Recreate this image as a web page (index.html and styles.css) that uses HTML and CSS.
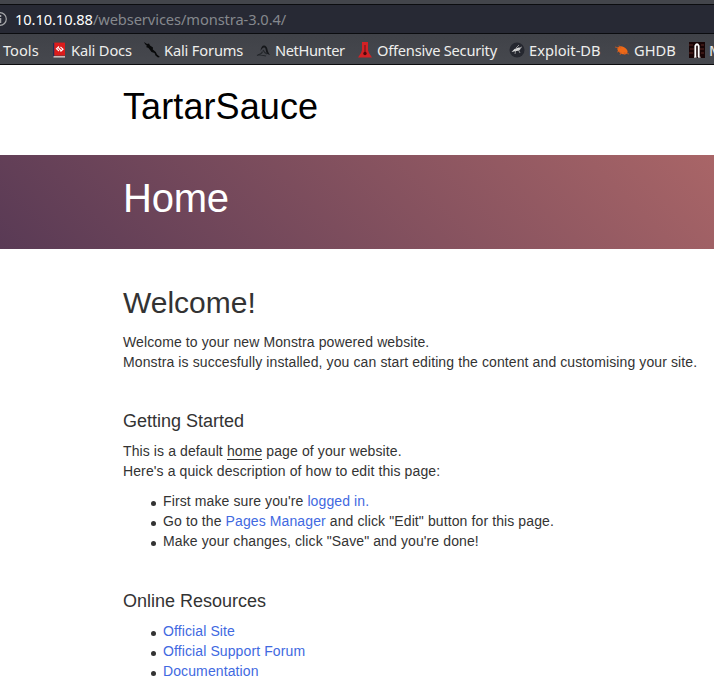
FILE: index.html
```html
<!DOCTYPE html>
<html lang="en">
<head>
<meta charset="utf-8">
<title>TartarSauce</title>
<link rel="stylesheet" href="styles.css">
</head>
<body>
<div class="browser">
  <div class="address">
    <svg class="info" viewBox="0 0 7 16"><circle cx="0" cy="8" r="6.3" fill="none" stroke="#a6a7aa" stroke-width="1.2"/><path d="M.5 4v2M.5 7v5" stroke="#a6a7aa" stroke-width="1.5"/></svg>
    <span class="host">10.10.10.88</span><span class="path">/webservices/monstra-3.0.4/</span>
  </div>
  <nav class="bookmarks">
    <span class="mark tools">Tools</span>
    <span class="mark"><svg viewBox="0 0 16 16"><path d="M2 1h1.5v14H2z" fill="#252a55"/><path d="M3.3.6H14v13H3.3z" fill="#dc1c1c"/><path d="M2.5 14h11.5v1.6H2.5z" fill="#c8bcbc"/><path d="M8 4.5 5.5 6.8 8 9M9.5 5 12 7.2 9.5 9.5M7.5 6l2.5 2.5" fill="none" stroke="#fff" stroke-width="1.1"/></svg><span class="docs">Kali Docs</span></span>
    <span class="mark"><svg viewBox="0 0 16 16"><path d="m0 0 3 2 2-.5 1 2 3 2-.2 2 3 2.5 1.2 2.5 3 2.5-2 .5-2.5-2-1-2.5-3-1-3-4L2 5l1-1-2-2z" fill="#08090a"/></svg><span class="forums">Kali Forums</span></span>
    <span class="mark"><svg viewBox="0 0 16 16"><path d="M5.5 9C6 4 9 2 11.500 5c1.500 2 .5 4 3.500 8l-2.500-1C10 9 11.500 7 9.500 5.500 8 5 7 6.500 5.500 9z" fill="#15171a"/><path d="M2 13.500c3-1 5-2 5.500-4M3 12.500l8 1.500M8 8c1 2 2 3 4 4" fill="none" stroke="#24272b" stroke-width="1.2"/></svg><span class="hunter">NetHunter</span></span>
    <span class="mark"><svg viewBox="0 0 16 16"><path d="M5 0h6v8l1 3 3 4.500H1L4 11l1-3z" fill="#d42125"/><path d="M8 3v8" stroke="#75161b" stroke-width="1.2"/><circle cx="8" cy="11.500" r="1.700" fill="#4f080c"/></svg><span class="security">Offensive Security</span></span>
    <span class="mark"><svg viewBox="0 0 16 16"><circle cx="8" cy="8" r="7.500" fill="#25272f"/><path d="M2.500 10 5.500 7l4-1.500 2.500 1-2 2-4 .8z" fill="#ddd"/><path d="m7 7-1 5M9 7l2 4M7 6l3-3M10 6l3-1" fill="none" stroke="#bbb" stroke-width=".7"/></svg><span class="exploit">Exploit-DB</span></span>
    <span class="mark"><svg viewBox="0 0 16 16"><ellipse cx="8.500" cy="8.300" rx="5.500" ry="3.500" transform="rotate(28 8.500 8.300)" fill="#ed6816"/><path d="M1 5l4 1M5 3.500l2 3M3 10l3-1M6 13l1-3M11 13l-1-3M15 12l-4-1" fill="none" stroke="#cc5b22" stroke-width=".8"/></svg><span class="ghdb">GHDB</span></span>
    <span class="mark"><svg viewBox="0 0 16 16"><path d="M0 0h16v16H0z" fill="#180405"/><path d="M0 3h4M1 7h4M0 11h4M12 3h3M11 7h4M12 11h3" stroke="#5c2825"/><path d="M6.300 15V4Q8 .5 9.700 4v11" fill="none" stroke="#fff" stroke-width="1.800"/><path d="M5 15.200h2.500M9 15.200h2.500" stroke="#eee"/></svg><span>M</span></span>
  </nav>
</div>
<header class="site">TartarSauce</header>
<div class="banner"><h1>Home</h1></div>
<main>
  <h2>Welcome!</h2>
  <p>Welcome to your new Monstra powered website.<br>Monstra is succesfully installed, you can start editing the content and customising your site.</p>
  <h3>Getting Started</h3>
  <p>This is a default <span class="home">home</span> page of your website.<br>Here's a quick description of how to edit this page:</p>
  <ul>
    <li>First make sure you're <a>logged in.</a></li>
    <li>Go to the <a>Pages Manager</a> and click "Edit" button for this page.</li>
    <li>Make your changes, click "Save" and you're done!</li>
  </ul>
  <h3>Online Resources</h3>
  <ul>
    <li><a>Official Site</a></li>
    <li><a>Official Support Forum</a></li>
    <li><a>Documentation</a></li>
  </ul>
</main>
</body>
</html>
```
FILE: styles.css
```css
* { box-sizing: border-box; }
body { margin: 0; width: 714px; height: 691px; overflow: hidden; background: #fff; color: #333; font: 14px/20px "Liberation Sans", Arial, sans-serif; }
.browser { height: 65px; padding-top: 4px; background: #43454b; border-bottom: 1px solid #0c0c0e; font-family: "Noto Sans", sans-serif; color: #eeeeec; white-space: nowrap; overflow: hidden; }
.address { display: flex; align-items: center; height: 30px; border: solid #0b0c0f; border-width: 1px 0; background: #272934; font-size: 14.67px; letter-spacing: -.09px; }
.info { width: 7px; height: 16px; margin-right: 8px; }
.host { color: #fff; }
.path { color: #85888d; }
.bookmarks { display: grid; grid-template-columns: 51px 93px 111px 102px 152px 105px 75px 60px; height: 30px; align-items: center; font-size: 14.67px; background: linear-gradient(#404248, #46484e); }
.mark { display: flex; align-items: center; gap: 4px; padding-top: 2px; }
.mark svg { width: 16px; height: 16px; flex: none; }
.tools { padding-left: 3px; }
.docs, .forums { letter-spacing: -.16px; }
.hunter { letter-spacing: -.4px; }
.security { letter-spacing: -.24px; }
.site { height: 90px; padding: 22px 0 0 123px; color: #000; font-size: 36px; line-height: 40px; letter-spacing: .1px; }
.banner { height: 94px; padding: 23px 0 0 123px; background: linear-gradient(45deg, #593a55, #a96567); color: #fff; }
h1, h2, h3 { margin: 0; font-weight: normal; }
h1 { font-size: 40px; line-height: 40px; letter-spacing: -.2px; }
main { padding: 34px 0 0 123px; white-space: nowrap; }
h2 { height: 49px; font-size: 30px; line-height: 40px; }
p { margin: 0 0 10px; }
p, li { letter-spacing: .107px; }
h3 { margin: 39px 0 10px; font-size: 18px; line-height: 20px; }
.home { border-bottom: 1px solid #333; }
ul { margin: 0; padding-left: 28px; list-style: none; }
li { display: flex; align-items: center; white-space: pre; }
li::before { content: ""; width: 5px; height: 5px; margin: 4px 7px 0 0; border-radius: 50%; background: #333; }
ul + h3 { margin-top: 40px; }
a { color: #4169e1; }
```
